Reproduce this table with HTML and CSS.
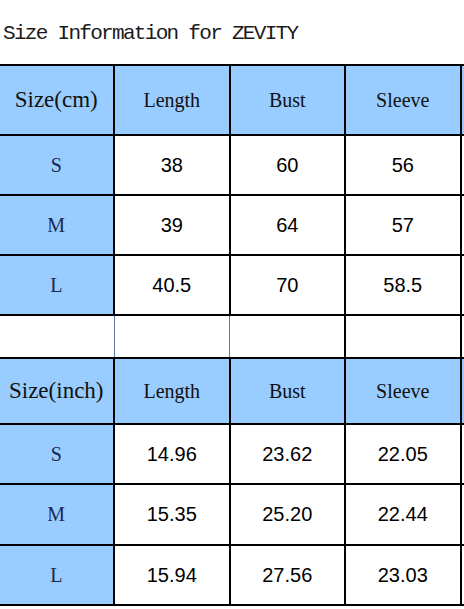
FILE: index.html
```html
<!DOCTYPE html>
<html lang="en">
<head>
<meta charset="utf-8">
<title>Size Information for ZEVITY</title>
<link rel="stylesheet" href="styles.css">
</head>
<body>
<div class="page">
  <div class="title">Size Information for ZEVITY</div>
  <div class="sheet">
    <table class="size-table">
      <colgroup>
        <col class="c1"><col class="cn"><col class="cn"><col class="cn"><col class="cn">
      </colgroup>
      <tbody>
        <tr class="head head-cm">
          <th class="unit">Size(cm)</th><th>Length</th><th>Bust</th><th>Sleeve</th><th></th>
        </tr>
        <tr class="row r60"><th class="sz">S</th><td>38</td><td>60</td><td>56</td><td></td></tr>
        <tr class="row r60"><th class="sz">M</th><td>39</td><td>64</td><td>57</td><td></td></tr>
        <tr class="row r60"><th class="sz">L</th><td>40.5</td><td>70</td><td>58.5</td><td></td></tr>
        <tr class="gap"><td></td><td></td><td></td><td></td><td></td></tr>
        <tr class="head head-in">
          <th class="unit">Size(inch)</th><th>Length</th><th>Bust</th><th>Sleeve</th><th></th>
        </tr>
        <tr class="row r60"><th class="sz">S</th><td>14.96</td><td>23.62</td><td>22.05</td><td></td></tr>
        <tr class="row r61"><th class="sz">M</th><td>15.35</td><td>25.20</td><td>22.44</td><td></td></tr>
        <tr class="row r60"><th class="sz">L</th><td>15.94</td><td>27.56</td><td>23.03</td><td></td></tr>
      </tbody>
    </table>
  </div>
</div>
</body>
</html>
```

FILE: styles.css
```css
html, body {
  margin: 0;
  padding: 0;
  background: #ffffff;
}

.page {
  width: 464px;
  height: 609px;
  overflow: hidden;
}

.title {
  padding: 19px 0 0 3px;
  line-height: 30px;
  height: 30px;
  font-family: "Liberation Mono", "DejaVu Sans Mono", monospace;
  font-size: 21px;
  letter-spacing: -1.7px;
  color: #1a1a1a;
  white-space: nowrap;
}

.sheet {
  margin-top: 15px;
  width: 464px;
  overflow: hidden;
}

.size-table {
  border-collapse: collapse;
  table-layout: fixed;
  width: 577px;
  margin-left: -2.5px;
}

.c1 { width: 115.5px; }
.cn { width: 115.5px; }

.size-table th,
.size-table td {
  border: 2px solid #000000;
  padding: 0;
  text-align: center;
  vertical-align: middle;
  overflow: hidden;
  white-space: nowrap;
}

.head th {
  background: #99ccff;
  font-family: "Liberation Serif", "DejaVu Serif", serif;
  font-weight: normal;
  font-size: 20px;
  color: #111111;
}

.head th.unit {
  font-size: 23px;
}

.head-cm { height: 70px; }
.head-in { height: 66px; }
.r60 { height: 60px; }
.r61 { height: 61px; }

.row th.sz {
  background: #99ccff;
  font-family: "Liberation Serif", "DejaVu Serif", serif;
  font-weight: normal;
  font-size: 20px;
  color: #1c2951;
}

.row td {
  background: #ffffff;
  font-family: "Liberation Sans", Arial, sans-serif;
  font-size: 20px;
  color: #000000;
}

.gap { height: 43px; }

.gap td {
  background: #ffffff;
}

.gap td:nth-child(1) {
  border-right: 1px solid #5a76a6;
}

.gap td:nth-child(2) {
  border-left: 1px solid #5a76a6;
  border-right: 1px solid #5a76a6;
}

.gap td:nth-child(3) {
  border-left: 1px solid #5a76a6;
}
```
